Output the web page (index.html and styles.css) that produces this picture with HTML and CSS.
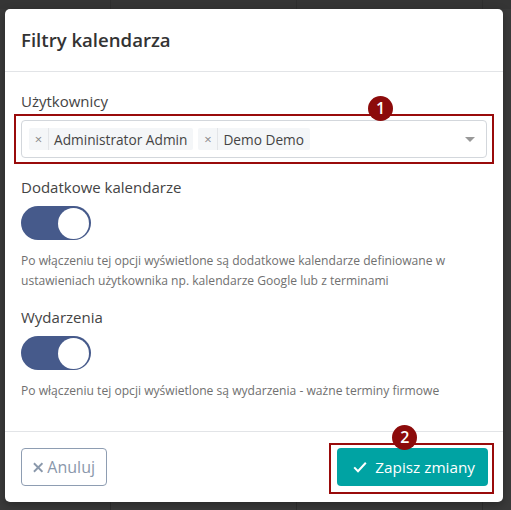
FILE: index.html
```html
<!DOCTYPE html>
<html lang="pl">
<head>
  <meta charset="UTF-8" />
  <meta name="viewport" content="width=device-width, initial-scale=1.0">
  <title>Filtry kalendarza</title>
  <link rel="stylesheet" href="styles.css">
</head>
<body>

  <div class="modal">
    <header class="modal-header">
      <h1>Filtry kalendarza</h1>
    </header>

    <div class="modal-body">
      <div class="group group-users">
        <label class="label">Użytkownicy</label>
        <div class="mark mark-users">
          <span class="badge badge-1">1</span>
          <div class="select">
            <span class="tag"><span class="tag-x">×</span><span class="tag-text">Administrator Admin</span></span>
            <span class="tag"><span class="tag-x">×</span><span class="tag-text">Demo Demo</span></span>
            <span class="caret"></span>
          </div>
        </div>
      </div>

      <div class="group">
        <label class="label">Dodatkowe kalendarze</label>
        <div class="switch on"><span class="knob"></span></div>
        <p class="help">Po włączeniu tej opcji wyświetlone są dodatkowe kalendarze definiowane w ustawieniach użytkownika np. kalendarze Google lub z terminami</p>
      </div>

      <div class="group">
        <label class="label">Wydarzenia</label>
        <div class="switch on"><span class="knob"></span></div>
        <p class="help">Po włączeniu tej opcji wyświetlone są wydarzenia - ważne terminy firmowe</p>
      </div>
    </div>

    <footer class="modal-footer">
      <button class="btn btn-cancel">
        <svg width="11" height="11" viewBox="0 0 11 11"><path d="M1 1L10 10M10 1L1 10" stroke="currentColor" stroke-width="2" fill="none"/></svg>
        Anuluj
      </button>
      <div class="mark mark-save">
        <span class="badge badge-2">2</span>
        <button class="btn btn-save">
          <svg width="14" height="12" viewBox="0 0 14 12"><path d="M1.2 6.4L5 10.2L12.8 1.8" stroke="currentColor" stroke-width="2" fill="none"/></svg>
          Zapisz zmiany
        </button>
      </div>
    </footer>
  </div>

</body>
</html>
```

FILE: styles.css
```css
:root {
  --teal: #00a3a3;
  --granat: #465a8b;
  --czerwony: #990b0b;
  --tekst: #444;
}
* { box-sizing: border-box; }
body {
  margin: 0;
  height: 510px;
  padding: 9px 8px 8px 5px;
  font-family: 'Open Sans', sans-serif;
  background-color: #3a3a3a;
  background-image:
    linear-gradient(to right, transparent 110px, #2f2f2f 110px, #2f2f2f 111px, transparent 111px,
      transparent 296px, #2f2f2f 296px, #2f2f2f 297px, transparent 297px,
      transparent 482px, #2f2f2f 482px, #2f2f2f 483px, transparent 483px),
    linear-gradient(to bottom, #353535 9px, transparent 9px);
}
.modal {
  width: 498px;
  height: 493px;
  background: #fff;
  border-radius: 5px;
  box-shadow: 0 3px 10px rgba(0,0,0,0.3);
  display: flex;
  flex-direction: column;
}
.modal-header {
  padding: 16px 16px;
  border-bottom: 1px solid #e2e4e7;
}
.modal-header h1 {
  margin: 0;
  font-size: 18.6px;
  line-height: 30px;
  font-weight: 600;
  color: #333;
}
.modal-body {
  flex: 1;
  padding: 18px 16px 15px;
}
.group {
  margin-bottom: 15px;
}
.group:last-child { margin-bottom: 0; }
.group-users { margin-bottom: 18px; }
.label {
  display: block;
  font-size: 15px;
  line-height: 22px;
  color: var(--tekst);
  margin-bottom: 8px;
}
.mark {
  position: relative;
  border: 2px solid var(--czerwony);
}
.mark-users {
  margin: -6px -7px -6px;
  padding: 4px 5px;
}
.badge {
  position: absolute;
  top: -20px;
  width: 25px;
  height: 25px;
  border-radius: 50%;
  background: #8c0b0b;
  color: #fff;
  font-size: 16px;
  font-weight: 600;
  line-height: 25px;
  text-align: center;
}
.badge-1 { left: 352px; }
.badge-2 { left: 61px; }
.select {
  display: flex;
  align-items: center;
  gap: 5px;
  height: 38px;
  padding: 0 7px;
  border: 1px solid #d3d7dc;
  border-radius: 4px;
}
.tag {
  display: flex;
  align-items: center;
  height: 22px;
  background: #f4f6f8;
  border-radius: 2px;
  font-size: 13.7px;
  color: var(--tekst);
}
.tag-x {
  width: 20px;
  text-align: center;
  color: #888;
  font-size: 13px;
  line-height: 22px;
  border-right: 1px solid #e3e5e8;
}
.tag-text {
  padding: 0 6px 0 5px;
}
.caret {
  margin-left: auto;
  margin-right: 4px;
  width: 0;
  height: 0;
  border-left: 5px solid transparent;
  border-right: 5px solid transparent;
  border-top: 5px solid #999;
}
.switch {
  width: 70px;
  height: 34px;
  border-radius: 17px;
  background: var(--granat);
  display: flex;
  align-items: center;
  justify-content: flex-end;
  padding: 0 2px;
}
.knob {
  width: 31px;
  height: 31px;
  border-radius: 50%;
  background: #fff;
}
.help {
  margin: 11px 0 0;
  font-size: 12.1px;
  line-height: 20px;
  color: #707070;
}
.modal-footer {
  display: flex;
  justify-content: space-between;
  align-items: center;
  padding: 16px;
  border-top: 1px solid #e2e4e7;
}
.btn {
  display: inline-flex;
  align-items: center;
  height: 38px;
  border-radius: 4px;
  font-family: inherit;
  white-space: nowrap;
  cursor: pointer;
}
.btn-cancel {
  width: 86px;
  padding: 0 11px;
  background: #fff;
  border: 1px solid #8e9db2;
  color: #8a98ab;
  font-size: 16px;
  gap: 4px;
}
.mark-save {
  margin: -5px -7px -8px -8px;
  padding: 3px 4px 6px 6px;
}
.btn-save {
  padding: 0 13px 0 16px;
  background: var(--teal);
  border: none;
  color: #fff;
  font-size: 15.3px;
  gap: 8px;
}
```
